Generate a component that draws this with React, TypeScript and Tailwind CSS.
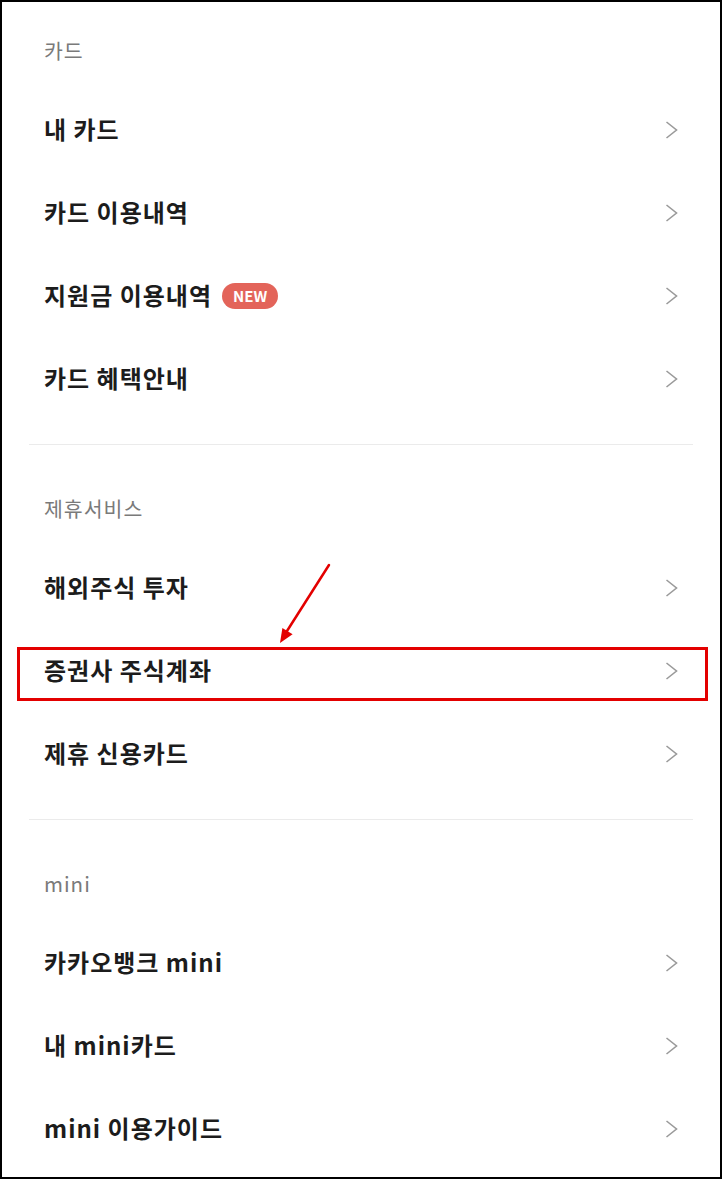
import type { ReactNode } from 'react';

interface Section {
  title: string;
  items: { label: ReactNode; isNew?: boolean }[];
}

const sections: Section[] = [
  {
    title: '카드',
    items: [
      { label: '내 카드' },
      { label: '카드 이용내역' },
      { label: '지원금 이용내역', isNew: true },
      { label: '카드 혜택안내' }
    ]
  },
  {
    title: '제휴서비스',
    items: [{ label: '해외주식 투자' }, { label: '증권사 주식계좌' }, { label: '제휴 신용카드' }]
  },
  {
    title: 'mini',
    items: [{ label: '카카오뱅크 mini' }, { label: '내 mini카드' }, { label: 'mini 이용가이드' }]
  }
];

function Chevron() {
  return (
    <svg width="13" height="18" viewBox="0 0 13 18" fill="none">
      <polyline points="1.5,1 11.5,9 1.5,17" stroke="#9a9a9a" strokeWidth="1.6" strokeLinejoin="miter" />
    </svg>
  );
}

function MenuRow({ label, isNew }: { label: ReactNode; isNew?: boolean }) {
  return (
    <div className="flex h-[83px] items-center justify-between px-[42px]">
      <div className="flex items-center pb-[1px]">
        <span className="text-[24px] font-bold tracking-[1px] text-[#1c1c1c]">{label}</span>
        {isNew && (
          <span className="ml-[10px] mt-[2px] flex h-[26px] w-[56px] items-center justify-center rounded-full bg-[#e3645a] text-[15px] font-bold text-white">
            NEW
          </span>
        )}
      </div>
      <Chevron />
    </div>
  );
}

export default function App() {
  return (
    <div
      className="relative h-[1179px] w-[722px] border-2 border-black bg-white"
      style={{ fontFamily: '"Noto Sans CJK KR", "Noto Sans", sans-serif' }}
    >
      <div className="pt-[11px]">
        {sections.map((section, i) => (
          <div key={section.title}>
            {i > 0 && <div className="mx-[27px] mb-[26px] mt-[24px] h-px bg-[#ebebeb]" />}
            <div className="flex h-[75px] items-center px-[42px] text-[20.5px] tracking-[1px] text-[#7a7a7a]">
              {section.title}
            </div>
            {section.items.map((item, j) => (
              <MenuRow key={j} label={item.label} isNew={item.isNew} />
            ))}
          </div>
        ))}
      </div>

      {/* annotation overlay */}
      <div className="absolute left-[15px] top-[645px] h-[54px] w-[691px] border-[3px] border-[#e30000]" />
      <svg className="absolute left-[268px] top-[553px]" width="70" height="95" viewBox="0 0 70 95">
        <line x1="59" y1="10" x2="17" y2="76" stroke="#e30000" strokeWidth="2.5" strokeLinecap="round" />
        <polygon points="10,88 22.6,79.3 12.4,72.9" fill="#e30000" />
      </svg>
    </div>
  );
}
